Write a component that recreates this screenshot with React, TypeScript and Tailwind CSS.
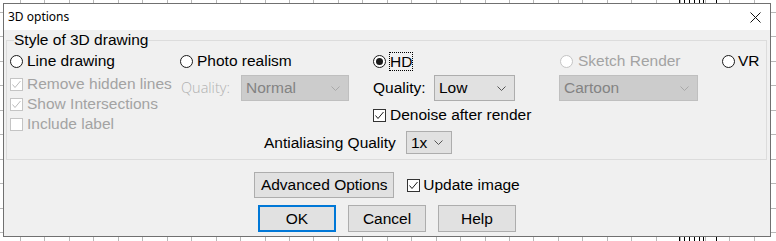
import React from "react";

const FONT = { fontFamily: '"Liberation Sans", Arial, sans-serif' };

function Radio({ checked = false, disabled = false }: { checked?: boolean; disabled?: boolean }) {
  return (
    <span
      className={
        "flex h-[13px] w-[13px] shrink-0 items-center justify-center rounded-full border bg-white " +
        (disabled ? "border-[#c4c4c4]" : "border-[#1a1a1a]")
      }
    >
      {checked && <span className="h-[7px] w-[7px] rounded-full bg-[#1a1a1a]" />}
    </span>
  );
}

function Check({ checked = false, disabled = false }: { checked?: boolean; disabled?: boolean }) {
  return (
    <span
      className={
        "flex h-[13px] w-[13px] shrink-0 items-center justify-center border bg-white " +
        (disabled ? "border-[#c4c4c4]" : "border-[#333333]")
      }
    >
      {checked && (
        <svg width="11" height="11" viewBox="0 0 11 11">
          <polyline
            points="1.5,5.5 4,8.5 9.5,2"
            fill="none"
            stroke={disabled ? "#bcbcbc" : "#1a1a1a"}
            strokeWidth="1"
          />
        </svg>
      )}
    </span>
  );
}

function Chevron({ color }: { color: string }) {
  return (
    <svg width="9" height="5" viewBox="0 0 9 5">
      <polyline points="0.5,0.5 4.5,4.5 8.5,0.5" fill="none" stroke={color} strokeWidth="1" />
    </svg>
  );
}

function Select({
  value,
  width,
  height = "h-[26px]",
  disabled = false,
}: {
  value: string;
  width: string;
  height?: string;
  disabled?: boolean;
}) {
  return (
    <div
      className={
        "flex items-center justify-between border pl-[4px] pr-[8px] text-[15.5px] " +
        width +
        " " +
        height +
        " " +
        (disabled
          ? "border-[#bfbfbf] bg-[#cccccc] text-[#838383]"
          : "border-[#adadad] bg-[#e1e1e1] text-black")
      }
    >
      <span>{value}</span>
      <Chevron color={disabled ? "#a8a8a8" : "#555555"} />
    </div>
  );
}

function Button({ children, width, primary = false }: { children: React.ReactNode; width: string; primary?: boolean }) {
  return (
    <div
      className={
        "flex h-[27px] items-center justify-center bg-[#e1e1e1] text-[15.5px] text-black " +
        width +
        " " +
        (primary ? "border-2 border-[#0078d7]" : "border border-[#adadad]")
      }
    >
      {children}
    </div>
  );
}

export default function App() {
  return (
    <div
      className="h-[241px] w-[776px] overflow-hidden bg-white bg-[linear-gradient(90deg,transparent_679px,#000_679px_680px,transparent_680px_684px,#000_684px_685px,transparent_685px_689px,#000_689px_690px,transparent_690px_694px,#000_694px_695px,transparent_695px_699px,#000_699px_700px,transparent_700px_703px,#000_703px_704px,transparent_704px_716px,#000_716px_717px,transparent_717px),repeating-linear-gradient(90deg,transparent_0_20px,#b8b8b8_20px_21px,transparent_21px_24.45px),repeating-linear-gradient(180deg,transparent_0_12px,#b8b8b8_12px_13px,transparent_13px_24.45px)] pl-[3px] pt-[3px]"
      style={FONT}
    >
      <div className="flex h-[234px] w-[768px] flex-col border border-[#707070] bg-[#f0f0f0]">
        {/* Title bar */}
        <div className="flex h-[26px] shrink-0 items-center justify-between bg-white pl-[4px] pr-[9px]">
          <span className="text-[12px] text-black" style={{ fontFamily: '"Noto Sans", "Liberation Sans", sans-serif' }}>
            3D options
          </span>
          <svg width="11" height="11" viewBox="0 0 11 11">
            <line x1="0.5" y1="0.5" x2="10.5" y2="10.5" stroke="#111" strokeWidth="1" />
            <line x1="10.5" y1="0.5" x2="0.5" y2="10.5" stroke="#111" strokeWidth="1" />
          </svg>
        </div>

        {/* Body */}
        <div className="flex flex-1 flex-col">
          <fieldset className="ml-[2px] mr-[3px] border border-[#dcdcdc] px-[3px] pb-[5px]">
            <legend className="ml-[4px] h-[20px] px-[0px] text-[15.5px] leading-[20px] text-black">
              Style of 3D drawing
            </legend>
            <div className="mt-[1px] flex h-[80px] text-[15.5px] leading-[20px]">
              {/* Column 1 */}
              <div className="flex w-[170px] flex-col">
                <div className="flex h-[20px] items-center gap-[4px] text-black">
                  <Radio />
                  <span>Line drawing</span>
                </div>
                <div className="mt-[3px] flex h-[20px] items-center gap-[4px] text-[#a3a3a3]">
                  <Check checked disabled />
                  <span>Remove hidden lines</span>
                </div>
                <div className="flex h-[20px] items-center gap-[4px] text-[#a3a3a3]">
                  <Check checked disabled />
                  <span>Show Intersections</span>
                </div>
                <div className="flex h-[20px] items-center gap-[4px] text-[#a3a3a3]">
                  <Check disabled />
                  <span>Include label</span>
                </div>
              </div>
              {/* Column 2 */}
              <div className="flex w-[193px] flex-col">
                <div className="flex h-[20px] items-center gap-[4px] text-black">
                  <Radio />
                  <span>Photo realism</span>
                </div>
                <div className="mt-[4px] flex items-center">
                  <span
                    className="w-[61px] pl-[1px] text-[14.5px] text-[#b0b0b0]"
                    style={{ fontFamily: '"Open Sans", "Noto Sans", sans-serif', fontWeight: 300 }}
                  >
                    Quality:
                  </span>
                  <Select value="Normal" width="w-[108px]" disabled />
                </div>
              </div>
              {/* Column 3 */}
              <div className="flex w-[186px] flex-col">
                <div className="flex h-[20px] items-center gap-[3px] text-black">
                  <Radio checked />
                  <span className="border border-dotted border-black px-[0px] leading-[17px]">HD</span>
                </div>
                <div className="mt-[4px] flex items-center">
                  <span className="w-[61px] text-black">Quality:</span>
                  <Select value="Low" width="w-[81px]" />
                </div>
                <div className="mt-[4px] flex h-[20px] items-center gap-[4px] text-black">
                  <Check checked />
                  <span>Denoise after render</span>
                </div>
              </div>
              {/* Column 4 */}
              <div className="flex w-[163px] flex-col">
                <div className="flex h-[20px] items-center gap-[5px] pl-[1px] text-[#a3a3a3]">
                  <Radio disabled />
                  <span>Sketch Render</span>
                </div>
                <div className="mt-[4px] flex">
                  <Select value="Cartoon" width="w-[139px]" disabled />
                </div>
              </div>
              {/* Column 5 */}
              <div className="flex flex-col">
                <div className="flex h-[20px] items-center gap-[3px] text-black">
                  <Radio />
                  <span>VR</span>
                </div>
              </div>
            </div>
            <div className="flex h-[23px] items-center pl-[254px] text-[15.5px] text-black">
              <span className="w-[142px]">Antialiasing Quality</span>
              <Select value="1x" width="w-[46px]" height="h-[23px]" />
            </div>
          </fieldset>

          <div className="mt-[12px] flex items-center justify-center text-[15.5px] text-black">
            <div className="flex h-[26px] w-[140px] items-center justify-center border border-[#adadad] bg-[#e1e1e1]">
              Advanced Options
            </div>
            <div className="ml-[13px] flex items-center gap-[3px]">
              <Check checked />
              <span>Update image</span>
            </div>
          </div>

          <div className="mt-[7px] flex justify-center gap-[12px]">
            <Button width="w-[78px]" primary>
              OK
            </Button>
            <Button width="w-[78px]">Cancel</Button>
            <Button width="w-[78px]">Help</Button>
          </div>
        </div>
      </div>
    </div>
  );
}
